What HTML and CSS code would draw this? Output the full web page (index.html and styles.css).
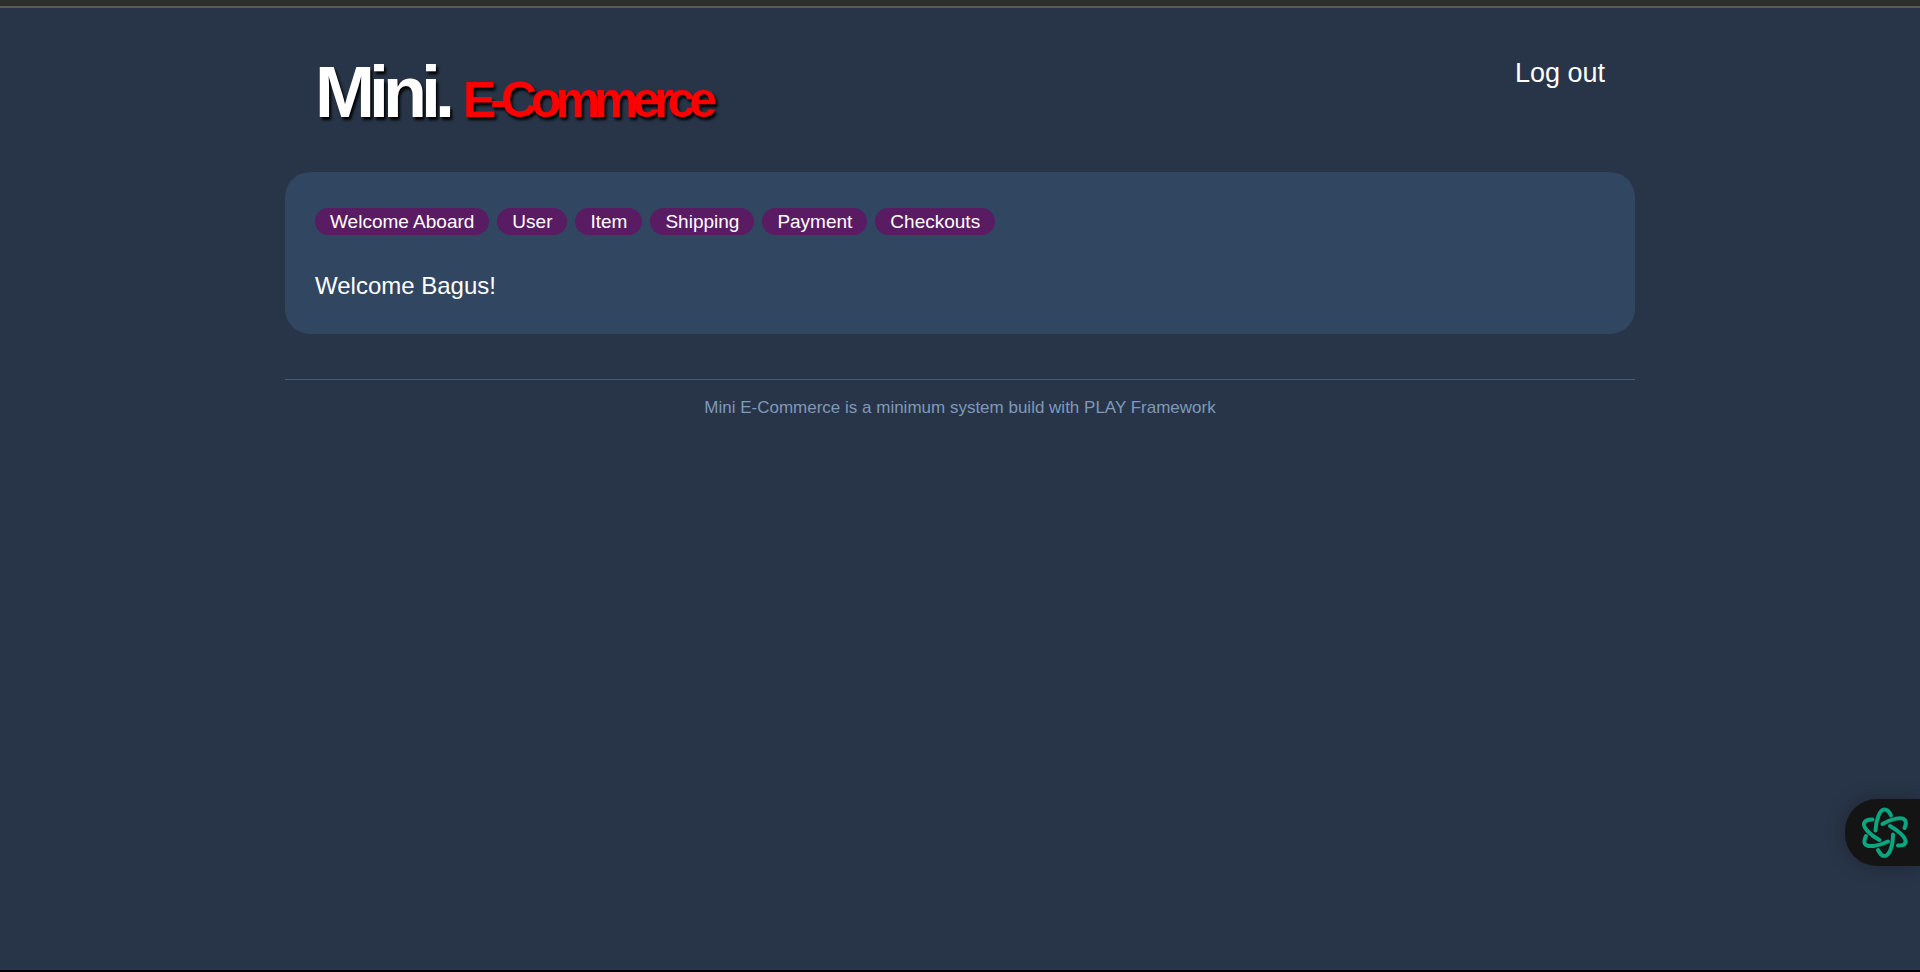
FILE: index.html
```html
<!DOCTYPE html>
<html lang="en">
<head>
<meta charset="utf-8">
<title>Mini. E-Commerce</title>
<link rel="stylesheet" href="styles.css">
</head>
<body>
<div class="page">
  <header class="header">
    <h1 class="brand">Mini. <span class="brand-sub">E-Commerce</span></h1>
    <a class="logout" href="#">Log out</a>
  </header>
  <main class="panel">
    <nav class="tabs">
      <a class="tab" href="#">Welcome Aboard</a>
      <a class="tab" href="#">User</a>
      <a class="tab" href="#">Item</a>
      <a class="tab" href="#">Shipping</a>
      <a class="tab" href="#">Payment</a>
      <a class="tab" href="#">Checkouts</a>
    </nav>
    <p class="welcome">Welcome Bagus!</p>
  </main>
  <footer class="footer">Mini E-Commerce is a minimum system build with PLAY Framework</footer>
</div>
<button class="assistant" type="button" aria-label="Open assistant">
  <svg class="assistant-icon" viewBox="0 0 50 54" aria-hidden="true">
    <path d="M13.500 24.500 C14 13 18 3.500 22.500 3.500 C25.500 3.500 27.500 6 29 9.500"/>
    <path d="M20.500 18 C30 12.500 40 10.500 43 14 C44.500 16.500 44 19 42.500 22"/>
    <path d="M28 20 C37 25 44.500 32 43.500 36.500 C42.500 39.500 40 39.500 36 39.500"/>
    <path d="M31 28.500 C31 41 27 50 22.500 50 C19.500 50 18 47.500 16 44"/>
    <path d="M26 35.500 C16 40.500 5 41.500 3 38 C1.500 35.500 2.500 33 4 30"/>
    <path d="M17.500 34 C8 29 1 21.500 2 17.500 C3 14 6 13.500 10.500 13.500"/>
  </svg>
</button>
</body>
</html>
```
FILE: styles.css
```css
* {
  box-sizing: border-box;
}

body {
  min-height: 100vh;
  margin: 0;
  padding: 0 24px;
  border-bottom: 2px solid #000;
  background: #283548;
  color: #fff;
  font-family: "Liberation Sans", Arial, sans-serif;
}

body::before {
  content: "";
  display: block;
  height: 6px;
  margin: 0 -24px;
  border-bottom: 2px solid #595955;
  background: #2e2e2e;
}

.page {
  max-width: 1350px;
  margin: 0 auto;
}

.header {
  display: flex;
  justify-content: space-between;
  align-items: flex-start;
  padding: 43px 30px 31px;
}

.brand {
  margin: 0;
  font-size: 72px;
  line-height: 82px;
  letter-spacing: -6px;
  text-shadow: 2px 3px 3px #000;
}

.brand-sub {
  color: #f00;
  font-size: 50px;
}

.logout {
  padding-top: 6px;
  color: #fff;
  font-size: 27px;
  line-height: 32px;
  text-decoration: none;
}

.panel {
  padding: 36px 30px 34px;
  border-radius: 25px;
  background: #314661;
}

.tabs {
  display: flex;
  flex-wrap: wrap;
  gap: 8px;
}

.tab {
  padding: 2px 15px;
  border-radius: 15px;
  background: #591b62;
  color: #fff;
  font-size: 19px;
  line-height: 23px;
  text-decoration: none;
}

.welcome {
  margin: 37px 0 0;
  font-size: 24px;
  line-height: 28px;
}

.footer {
  margin-top: 45px;
  padding: 18px 0;
  border-top: 1px solid #455d7c;
  color: #7f99ba;
  font-size: 17px;
  line-height: 20px;
  text-align: center;
}

.assistant {
  position: fixed;
  right: 0;
  bottom: 106px;
  display: flex;
  align-items: center;
  width: 75px;
  height: 67px;
  padding: 0 0 0 17px;
  border: 0;
  border-radius: 32px 0 0 32px;
  background: #141414;
  box-shadow: 0 0 20px rgba(0, 0, 0, 0.25);
}

.assistant-icon {
  width: 50px;
  height: 54px;
  fill: none;
  stroke: #0aa67f;
  stroke-width: 4;
  stroke-linecap: round;
  stroke-linejoin: round;
}
```
